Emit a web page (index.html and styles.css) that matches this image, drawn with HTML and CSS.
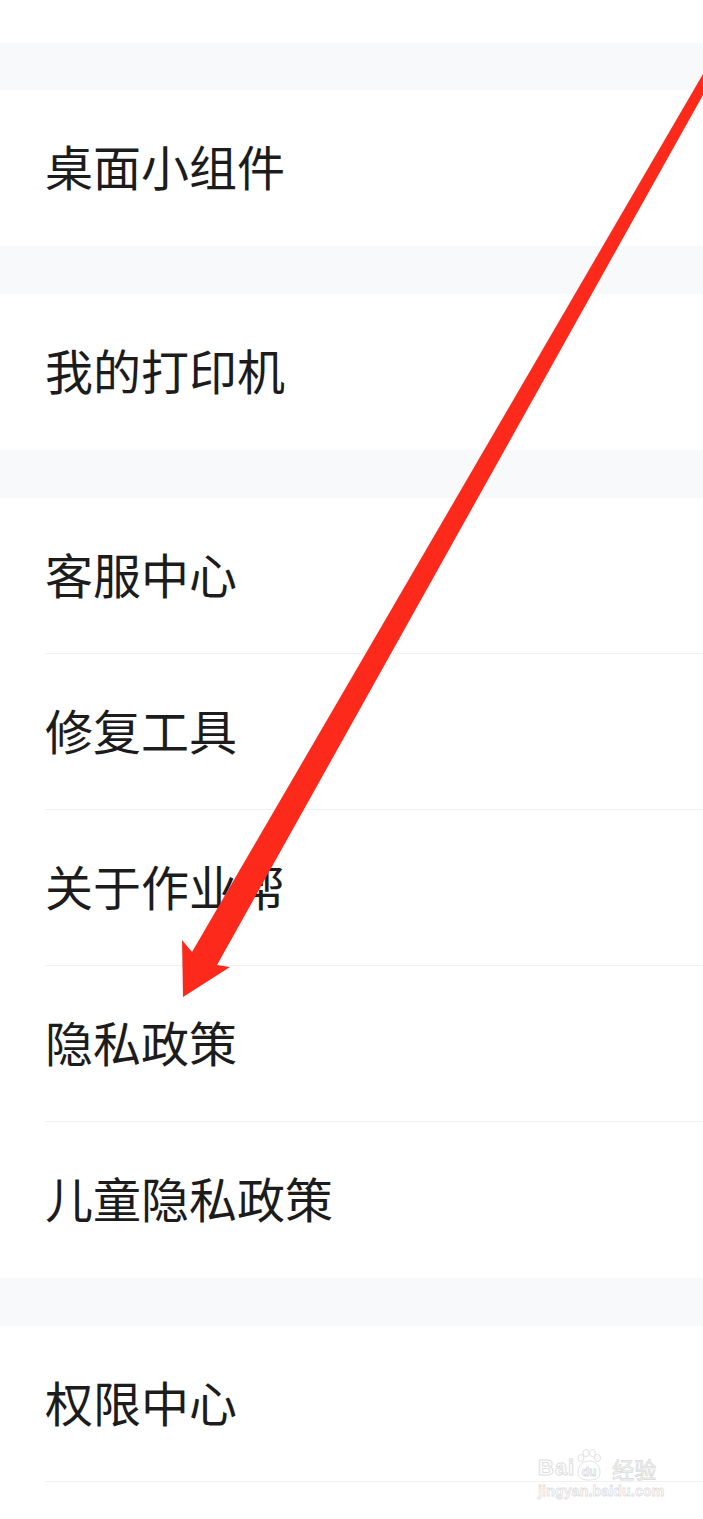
FILE: index.html
```html
<!DOCTYPE html>
<html lang="zh-CN">
<head>
    <meta charset="UTF-8">
    <meta name="viewport" content="width=device-width, initial-scale=1.0">
    <title>设置</title>
    <link rel="stylesheet" href="styles.css">
</head>
<body>
    <div class="page">
        <div class="group top-group"></div>
        <div class="band band-first"></div>

        <div class="group">
            <div class="item">桌面小组件</div>
        </div>
        <div class="band"></div>

        <div class="group">
            <div class="item">我的打印机</div>
        </div>
        <div class="band"></div>

        <div class="group">
            <div class="item">客服中心</div>
            <div class="item">修复工具</div>
            <div class="item">关于作业帮</div>
            <div class="item">隐私政策</div>
            <div class="item">儿童隐私政策</div>
        </div>
        <div class="band"></div>

        <div class="group">
            <div class="item">权限中心</div>
            <div class="item item-cut"></div>
        </div>

        <!-- red annotation arrow drawn over the list -->
        <svg class="arrow" width="703" height="1519" viewBox="0 0 703 1519">
            <polygon points="756,0 746,0 192,952 182,940 183,997 230,967 217,965" fill="#fd2a1c"/>
        </svg>

        <div class="watermark">
            <div class="wm-logo">
                <span class="wm-text">Bai</span>
                <svg class="wm-paw" width="26" height="32" viewBox="0 0 26 32">
                    <ellipse cx="5" cy="9" rx="3" ry="3.6" fill="#fff" stroke="#e2e2e2" stroke-width="1"/>
                    <ellipse cx="10" cy="4" rx="3" ry="3.6" fill="#fff" stroke="#e2e2e2" stroke-width="1"/>
                    <ellipse cx="16.5" cy="4" rx="3" ry="3.6" fill="#fff" stroke="#e2e2e2" stroke-width="1"/>
                    <ellipse cx="21.5" cy="9" rx="3" ry="3.6" fill="#fff" stroke="#e2e2e2" stroke-width="1"/>
                    <path d="M2 24 C2 15 8 12 13 12 C18 12 24 15 24 24 C24 30 18 31 13 31 C8 31 2 30 2 24 Z" fill="#fff" stroke="#e2e2e2" stroke-width="1"/>
                    <text x="13" y="27" text-anchor="middle" class="wm-du">du</text>
                </svg>
                <span class="wm-text wm-cn">经验</span>
            </div>
            <div class="wm-url">jingyan.baidu.com</div>
        </div>
    </div>
</body>
</html>
```

FILE: styles.css
```css
body {
    margin: 0;
    padding: 0;
    background-color: #ffffff;
    font-family: "Noto Sans CJK SC", "Noto Sans", sans-serif;
}

.page {
    position: relative;
    width: 703px;
    height: 1519px;
    overflow: hidden;
    background-color: #ffffff;
}

.top-group {
    height: 43px;
}

.band {
    height: 48px;
    background-color: #f8f9fa;
}

.band-first {
    height: 47px;
}

.group {
    background-color: #ffffff;
}

.item {
    box-sizing: border-box;
    height: 156px;
    margin-left: 45px;
    padding-bottom: 6px;
    display: flex;
    align-items: center;
    font-size: 48px;
    color: #1c1c1c;
    border-bottom: 1px solid #f1f1f1;
}

.item:last-child {
    border-bottom: none;
}

.item-cut {
    height: 37px;
}

.arrow {
    position: absolute;
    top: 0;
    left: 0;
    pointer-events: none;
}

.watermark {
    position: absolute;
    left: 538px;
    top: 1447px;
    display: flex;
    flex-direction: column;
    align-items: flex-start;
}

.wm-logo {
    display: flex;
    align-items: flex-end;
    height: 32px;
}

.wm-text {
    font-family: "Liberation Sans", Arial, sans-serif;
    font-size: 22px;
    font-weight: bold;
    line-height: 22px;
    color: #ffffff;
    -webkit-text-stroke: 1px #dedede;
    letter-spacing: 1px;
}

.wm-cn {
    font-family: "Noto Sans CJK SC", sans-serif;
    font-size: 22px;
    font-weight: normal;
    margin-left: 10px;
    letter-spacing: 0;
}

.wm-paw {
    margin-left: 1px;
    margin-bottom: -2px;
}

.wm-du {
    font-family: "Liberation Sans", Arial, sans-serif;
    font-size: 12px;
    font-weight: bold;
    fill: #ffffff;
    stroke: #dcdcdc;
    stroke-width: 0.8;
}

.wm-url {
    margin-top: 5px;
    font-family: "Liberation Sans", Arial, sans-serif;
    font-size: 14px;
    line-height: 14px;
    font-weight: bold;
    letter-spacing: 0.2px;
    color: #ffffff;
    -webkit-text-stroke: 0.8px #e0e0e0;
}
```
